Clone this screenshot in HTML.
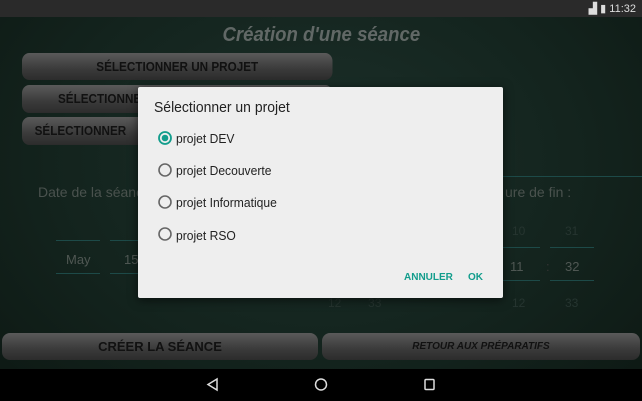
<!DOCTYPE html><html><head><style>
body{margin:0;width:642px;height:401px;overflow:hidden;position:relative;font-family:"Liberation Sans",sans-serif;background:radial-gradient(ellipse at 50% 40%,#1c302a 0%,#13231d 60%,#0d1813 100%)}
.a{position:absolute}
.btn{position:absolute;border-radius:8px;background:linear-gradient(#5a5a5a,#3a3a3a 60%,#2c2c2c);color:#111;font-weight:bold;font-size:13px;text-align:center;transform:scaleX(.9);transform-origin:left}
.t{color:#4a524e;font-size:14px}
.line{position:absolute;height:1px;background:#1d4a48}
.d{position:absolute;font-size:13px;color:#222;transform:scaleX(.93);transform-origin:left}
</style></head><body>
<div class="a" style="left:0;top:0;width:642px;height:17px;background:#2a2a2a;color:#ddd;font-size:11px"><span class="a" style="right:6px;top:2px">▟ ▮ 11:32</span></div>
<div class="a" style="left:0;top:24px;width:642px;text-align:center;color:#616866;font-size:20px;font-style:italic;font-weight:bold"><span style="display:inline-block;transform:scaleX(.93)">Création d'une séance</span></div>
<div class="btn" style="left:22px;top:53px;width:345px;height:27px;line-height:27px">SÉLECTIONNER UN PROJET</div>
<div class="btn" style="left:22px;top:85px;width:345px;height:28px;line-height:28px;text-align:left;padding-left:40px;box-sizing:border-box">SÉLECTIONNER</div>
<div class="btn" style="left:22px;top:117px;width:345px;height:28px;line-height:28px;text-align:left;padding-left:14px;box-sizing:border-box">SÉLECTIONNER</div>
<div class="a t" style="left:38px;top:184px">Date de la séance</div>
<div class="a t" style="left:505px;top:184px">ure de fin :</div>
<div class="line" style="left:500px;top:176px;width:142px"></div>
<div class="a" style="left:66px;top:252px;color:#4f5753;font-size:13px">May</div>
<div class="a" style="left:124px;top:252px;color:#4f5753;font-size:13px">15</div>
<div class="a" style="left:510px;top:259px;color:#4f5753;font-size:13px">11</div>
<div class="a" style="left:565px;top:259px;color:#4f5753;font-size:13px">32</div>
<div class="a" style="left:546px;top:259px;color:#333;font-size:13px">:</div>
<div class="a" style="left:512px;top:224px;color:#263530;font-size:12px">10</div>
<div class="a" style="left:565px;top:224px;color:#263530;font-size:12px">31</div>
<div class="a" style="left:512px;top:296px;color:#263530;font-size:12px">12</div>
<div class="a" style="left:565px;top:296px;color:#263530;font-size:12px">33</div>
<div class="a" style="left:328px;top:296px;color:#263530;font-size:12px">12 &nbsp;&nbsp;&nbsp;&nbsp;&nbsp;&nbsp;&nbsp;33</div>
<div class="line" style="left:56px;top:240px;width:44px"></div><div class="line" style="left:56px;top:273px;width:44px"></div>
<div class="line" style="left:110px;top:240px;width:30px"></div><div class="line" style="left:110px;top:273px;width:30px"></div>
<div class="line" style="left:500px;top:247px;width:40px"></div><div class="line" style="left:500px;top:280px;width:40px"></div>
<div class="line" style="left:550px;top:247px;width:44px"></div><div class="line" style="left:550px;top:280px;width:44px"></div>
<div class="btn" style="left:2px;top:333px;width:316px;height:27px;line-height:27px;transform:none;font-size:13px">CRÉER LA SÉANCE</div>
<div class="btn" style="left:322px;top:333px;width:318px;height:27px;line-height:27px;transform:none;font-size:10px;font-style:italic;font-weight:bold">RETOUR AUX PRÉPARATIFS</div>
<div class="a" style="left:0;top:369px;width:642px;height:32px;background:#000"></div>
<svg class="a" style="left:0;top:369px" width="642" height="32"><g fill="none" stroke="#ddd" stroke-width="1.5"><path d="M217 10 L208 15.5 L217 21 Z"/><circle cx="321" cy="15.5" r="5.5"/><rect x="425" y="10.5" width="9" height="10" rx="1"/></g></svg>
<div class="a" style="left:138px;top:87px;width:365px;height:211px;background:#eeeeee;box-shadow:0 2px 10px rgba(0,0,0,.6);border-radius:2px">
<div class="d" style="left:16px;top:12px;font-size:15px">Sélectionner un projet</div>
<svg class="a" style="left:19px;top:43px" width="16" height="120"><g fill="none" stroke="#666" stroke-width="1.6"><circle cx="8" cy="8" r="6" stroke="#129d8c" stroke-width="1.8"/><circle cx="8" cy="40" r="6"/><circle cx="8" cy="72" r="6"/><circle cx="8" cy="104" r="6"/></g><circle cx="8" cy="8" r="3.3" fill="#129d8c"/></svg>
<div class="d" style="left:38px;top:44px">projet DEV</div>
<div class="d" style="left:38px;top:76px">projet Decouverte</div>
<div class="d" style="left:38px;top:108px">projet Informatique</div>
<div class="d" style="left:38px;top:141px">projet RSO</div>
<div class="a" style="left:266px;top:185px;font-size:10px;font-weight:bold;color:#129d8c">ANNULER</div>
<div class="a" style="left:330px;top:185px;font-size:10px;font-weight:bold;color:#129d8c">OK</div>
</div>
</body></html>
